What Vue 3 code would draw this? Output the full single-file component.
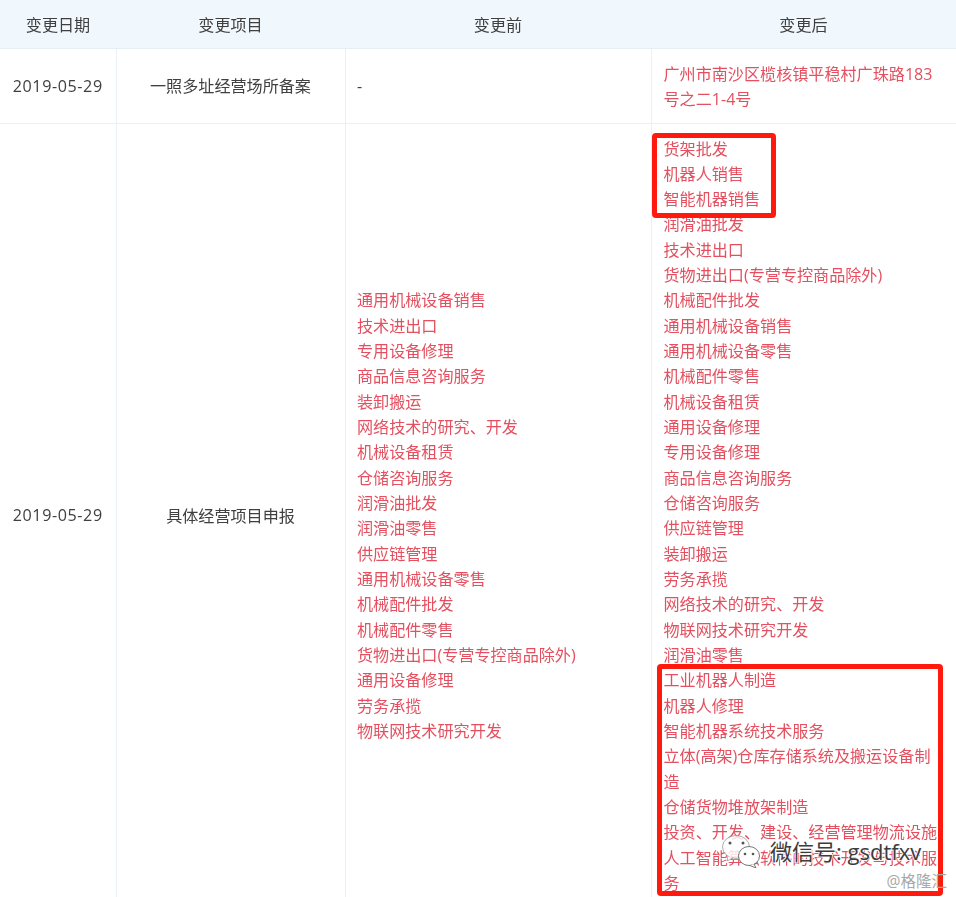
<script setup>
const before = ['通用机械设备销售','技术进出口','专用设备修理','商品信息咨询服务','装卸搬运','网络技术的研究、开发','机械设备租赁','仓储咨询服务','润滑油批发','润滑油零售','供应链管理','通用机械设备零售','机械配件批发','机械配件零售','货物进出口(专营专控商品除外)','通用设备修理','劳务承揽','物联网技术研究开发']
const after = ['货架批发','机器人销售','智能机器销售','润滑油批发','技术进出口','货物进出口(专营专控商品除外)','机械配件批发','通用机械设备销售','通用机械设备零售','机械配件零售','机械设备租赁','通用设备修理','专用设备修理','商品信息咨询服务','仓储咨询服务','供应链管理','装卸搬运','劳务承揽','网络技术的研究、开发','物联网技术研究开发','润滑油零售','工业机器人制造','机器人修理','智能机器系统技术服务','立体(高架)仓库存储系统及搬运设备制造','仓储货物堆放架制造','投资、开发、建设、经营管理物流设施','人工智能算法软件的技术开发与技术服务']
</script>

<template>
  <div class="page">
    <table class="table">
      <colgroup>
        <col class="c1" /><col class="c2" /><col class="c3" /><col class="c4" />
      </colgroup>
      <thead>
        <tr>
          <th>变更日期</th><th>变更项目</th><th>变更前</th><th>变更后</th>
        </tr>
      </thead>
      <tbody>
        <tr class="r1">
          <td class="center date">2019-05-29</td>
          <td class="center">一照多址经营场所备案</td>
          <td>-</td>
          <td class="red">广州市南沙区榄核镇平稳村广珠路183号之二1-4号</td>
        </tr>
        <tr>
          <td class="center date">2019-05-29</td>
          <td class="center">具体经营项目申报</td>
          <td class="red"><div v-for="t in before" :key="t">{{ t }}</div></td>
          <td class="red"><div v-for="t in after" :key="t">{{ t }}</div></td>
        </tr>
      </tbody>
    </table>
    <div class="box box-a"></div>
    <div class="box box-b"></div>
    <div class="mark">
      <svg class="wechat" viewBox="0 0 38 33" width="38" height="33">
        <ellipse cx="14" cy="12" rx="13.5" ry="11.5" fill="#fff" fill-opacity=".8" stroke="#777" stroke-width=".6" />
        <path d="M6 21l-1 5 6-3" fill="#fff" fill-opacity=".8" stroke="#777" stroke-width=".6" />
        <ellipse cx="27" cy="21" rx="10.5" ry="9.5" fill="#fff" stroke="#555" stroke-width=".8" />
        <path d="M32 29l2 4-6-2.500" fill="#fff" stroke="#555" stroke-width=".8" />
        <circle cx="8" cy="8" r="1.500" fill="#555" /><circle cx="21" cy="8" r="1.500" fill="#555" />
        <circle cx="23" cy="19" r="1.300" fill="#555" /><circle cx="31" cy="19" r="1.300" fill="#555" />
      </svg>
      <span class="mark-text">微信号: gsdtfxv</span>
    </div>
    <span class="credit">@格隆汇</span>
  </div>
</template>

<style>
html, body { margin: 0; background: #fff; }
</style>

<style scoped>
.page {
  position: relative;
  width: 956px;
  height: 897px;
  overflow: hidden;
  font-family: "Open Sans", "Noto Sans CJK SC", sans-serif;
  font-size: 16.1px;
  line-height: 25.33px;
  color: #404040;
}
.table {
  width: 956px;
  border-collapse: collapse;
  table-layout: fixed;
  filter: blur(0.35px);
}
.c1 { width: 116px; }
.c2 { width: 229px; }
.c3 { width: 306px; }
.c4 { width: 305px; }
th {
  height: 48px;
  padding: 3px 0 0;
  box-sizing: border-box;
  background: #f1f8fd;
  font-weight: 400;
  border-bottom: 1px solid #e6eff8;
  text-align: center;
}
td {
  padding: 13px 13px 10px 11.500px;
  border: 1px solid #e9f0f7;
  border-top: 0;
  vertical-align: middle;
  text-align: left;
}
td:last-child { padding-left: 12px; }
td:first-child { border-left: 0; }
td:last-child { border-right: 0; }
.r1 td { height: 51px; }
.center { text-align: center; padding-left: 13px; }
td.date { padding: 2px 0 0; letter-spacing: 0.6px; }
.red { color: #e4505f; }
.box {
  position: absolute;
  box-sizing: border-box;
  border: 5px solid #ff1a0d;
  border-radius: 4px;
}
.box-a { left: 652px; top: 133px; width: 124px; height: 85px; }
.box-b { left: 657px; top: 664px; width: 286px; height: 232px; }
.mark {
  position: absolute;
  left: 722px;
  top: 835px;
  display: flex;
  align-items: center;
  gap: 10px;
}
.mark-text {
  color: #3c3c3c;
  font-size: 22px;
  white-space: nowrap;
  -webkit-text-stroke: 2px rgba(255, 255, 255, 0.85);
  paint-order: stroke fill;
}
.credit {
  position: absolute;
  right: 9px;
  top: 869px;
  color: #a8a8a8;
  font-size: 15.500px;
  line-height: 24px;
}
</style>
